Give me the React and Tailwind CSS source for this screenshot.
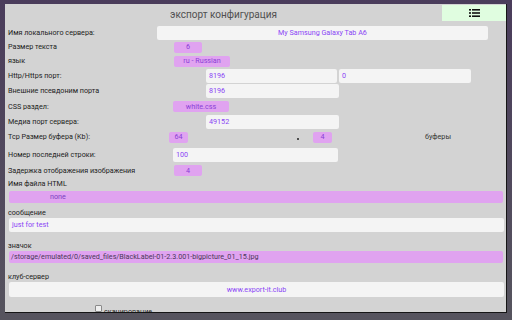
import React from 'react';

const Label = ({ children }) => (
  <div className="w-[149px] shrink-0 text-[7.2px] leading-none text-[#222]">{children}</div>
);

const Field = ({ className = '', children, align = 'text-left pl-[3px]' }) => (
  <div className={`h-[14px] shrink-0 rounded-[2px] bg-[#f4f4f4] flex items-center text-[7.2px] leading-none text-[#8a45f5] ${align} ${className}`}>
    <span className="w-full">{children}</span>
  </div>
);

const Pill = ({ className = '', children }) => (
  <div className={`h-[11px] shrink-0 rounded-[2px] bg-[#e0a3f0] flex items-center justify-center text-[7.2px] leading-none text-[#8a3fd6] ${className}`}>
    {children}
  </div>
);

const ListIcon = () => (
  <svg width="11" height="8" viewBox="0 0 11 8" fill="#111">
    <rect x="0" y="0" width="2" height="1.6" />
    <rect x="3" y="0" width="8" height="1.6" />
    <rect x="0" y="3.2" width="2" height="1.6" />
    <rect x="3" y="3.2" width="8" height="1.6" />
    <rect x="0" y="6.4" width="2" height="1.6" />
    <rect x="3" y="6.4" width="8" height="1.6" />
  </svg>
);

export default function App() {
  return (
    <div
      className="w-[512px] h-[320px] overflow-hidden bg-gradient-to-b from-[#4a3c5b] to-[#56545e] pt-[4px] pl-[5px]"
      style={{ fontFamily: 'Roboto, "Liberation Sans", sans-serif' }}
    >
      <div className="w-[502px] h-[309px] overflow-hidden bg-[#d3d3d3] border-r border-b border-[#151515] flex flex-col">
        {/* header */}
        <div className="h-[18px] shrink-0 flex items-start pt-[1px]">
          <div className="flex-1 pt-[2px] text-center text-[10px] leading-[16px] text-[#505050]">экспорт конфигурация</div>
          <button className="w-[64px] h-[16px] bg-[#e0fde0] flex items-center justify-center">
            <ListIcon />
          </button>
        </div>

        <div className="mt-[3px] h-[15px] shrink-0 flex items-center pl-[3px]">
          <Label>Имя локального сервера:</Label>
          <Field className="w-[331px]" align="text-center">My Samsung Galaxy Tab A6</Field>
        </div>

        <div className="h-[14px] shrink-0 flex items-center pl-[3px]">
          <Label>Размер текста</Label>
          <Pill className="ml-[17px] w-[28px]">6</Pill>
        </div>

        <div className="h-[14px] shrink-0 flex items-center pl-[3px]">
          <Label>язык</Label>
          <Pill className="ml-[17px] w-[56px]">ru - Russian</Pill>
        </div>

        <div className="h-[15px] shrink-0 flex items-center pl-[3px]">
          <Label>Http/Https порт:</Label>
          <Field className="ml-[49px] w-[131px]">8196</Field>
          <Field className="ml-[2px] w-[132px]">0</Field>
        </div>

        <div className="h-[16px] shrink-0 flex items-center pl-[3px]">
          <Label>Внешние псевдоним порта</Label>
          <Field className="ml-[49px] w-[133px]">8196</Field>
        </div>

        <div className="h-[15px] shrink-0 flex items-center pl-[3px]">
          <Label>CSS раздел:</Label>
          <Pill className="ml-[16px] w-[56px]">white.css</Pill>
        </div>

        <div className="h-[15px] shrink-0 flex items-center pl-[3px]">
          <Label>Медиа порт сервера:</Label>
          <Field className="ml-[49px] w-[133px]">49152</Field>
        </div>

        <div className="h-[16px] shrink-0 flex items-center pl-[3px]">
          <Label>Tcp Размер буфера (Kb):</Label>
          <Pill className="ml-[12px] w-[19px]">64</Pill>
          <div className="ml-[109px] mt-[3px] w-[2px] h-[2px] rounded-full bg-[#222]" />
          <Pill className="ml-[14px] w-[19px]">4</Pill>
          <div className="ml-[93px] text-[7.2px] leading-none text-[#333]">буферы</div>
        </div>

        <div className="h-[19px] shrink-0 flex items-center pl-[3px]">
          <Label>Номер последней строки:</Label>
          <Field className="ml-[16px] w-[165px]">100</Field>
        </div>

        <div className="h-[13px] shrink-0 flex items-center pl-[3px]">
          <Label>Задержка отображения изображения</Label>
          <Pill className="ml-[17px] w-[28px]">4</Pill>
        </div>

        <div className="h-[14px] shrink-0 flex items-center pl-[3px]">
          <Label>Имя файла HTML</Label>
        </div>

        <div className="h-[12px] shrink-0 ml-[4px] w-[494px] rounded-[2px] bg-[#e0a3f0] flex items-center pl-[41px] text-[7.2px] leading-none text-[#7a3fc0]">
          none
        </div>

        <div className="h-[15px] shrink-0 flex items-center pt-[5px] pl-[3px]">
          <Label>сообщение</Label>
        </div>

        <div className="ml-[4px]">
          <Field className="w-[495px]">just for test</Field>
        </div>

        <div className="h-[19px] shrink-0 flex items-center pt-[8px] pl-[3px]">
          <Label>значок</Label>
        </div>

        <div className="h-[12px] shrink-0 ml-[4px] w-[494px] rounded-[2px] bg-[#e0a3f0] flex items-center pl-[2px] text-[7.2px] leading-none text-[#4a3858] whitespace-nowrap">
          /storage/emulated/0/saved_files/BlackLabel-01-2.3.001-bigpicture_01_15.jpg
        </div>

        <div className="h-[19px] shrink-0 flex items-center pt-[8px] pl-[3px]">
          <Label>клуб-сервер</Label>
        </div>

        <div className="ml-[4px]">
          <Field className="w-[495px] h-[15px]" align="text-center">www.export-it.club</Field>
        </div>

        <div className="mt-[8px] shrink-0 flex items-start pl-[90px]">
          <div className="w-[7px] h-[7px] rounded-[1px] border border-[#8a8a8a] bg-[#efefef]" />
          <span className="ml-[2px] mt-[3px] text-[7.2px] leading-none text-[#222]">сканирование</span>
        </div>
      </div>
    </div>
  );
}
